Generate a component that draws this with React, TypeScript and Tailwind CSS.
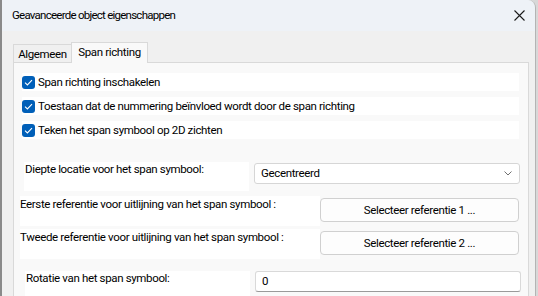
import React from 'react';

const font = { fontFamily: 'Roboto, "Noto Sans", sans-serif' };

const Check: React.FC = () => (
  <span className="flex h-[13px] w-[13px] shrink-0 items-center justify-center rounded-[3px] bg-[#005fb8]">
    <svg width="9" height="7" viewBox="0 0 9 7" fill="none">
      <path d="M1 3.6 L3.4 6 L8 1.2" stroke="#ffffff" strokeWidth="1.1" />
    </svg>
  </span>
);

const CheckRow: React.FC<{ label: string }> = ({ label }) => (
  <div className="ml-[2px] flex h-[18px] w-[497px] items-center gap-[3px] bg-white">
    <Check />
    <span>{label}</span>
  </div>
);

const App: React.FC = () => {
  return (
    <div
      className="flex h-[296px] w-[538px] overflow-hidden whitespace-nowrap bg-[#d8d8d8] text-[11.5px] leading-[15px] tracking-[-0.35px] text-black"
      style={font}
    >
      <div className="flex h-full w-[536px] flex-col overflow-hidden rounded-tr-[8px] border-l-2 border-r border-l-[#8a8a8a] border-r-[#b4b4b4]">
        <div className="flex h-[31px] shrink-0 items-center justify-between bg-[#eef2f7] pl-[10px] pr-[9px]">
          <span className="text-[11.5px] tracking-[-0.75px]">Geavanceerde object eigenschappen</span>
          <svg width="11" height="11" viewBox="0 0 11 11" className="mr-[1px]">
            <path d="M0.5 0.5 L10.5 10.5 M10.5 0.5 L0.5 10.5" stroke="#1a1a1a" strokeWidth="1.1" />
          </svg>
        </div>

        <div className="flex flex-1 flex-col bg-[#f0f0f0] pl-[11px] pt-[12px]">
          <div className="flex h-[19px] items-end">
            <div className="flex h-[18px] w-[59px] items-center justify-center border border-b-0 border-[#d9d9d9] bg-[#f0f0f0] pt-[1px]">
              Algemeen
            </div>
            <div className="relative -ml-px mb-[-1px] flex h-[21px] w-[77px] items-start justify-center border border-b-0 border-[#d9d9d9] bg-[#f9f9f9] pt-[2px]">
              Span richting
            </div>
          </div>

          <div className="flex w-[516px] flex-1 flex-col border border-b-0 border-[#d9d9d9] bg-[#f9f9f9] pl-[6px] pt-[10px]">
            <div className="flex flex-col gap-[6px]">
              <CheckRow label="Span richting inschakelen" />
              <CheckRow label="Toestaan dat de nummering beïnvloed wordt door de span richting" />
              <CheckRow label="Teken het span symbool op 2D zichten" />
            </div>

            <div className="mt-[23px] flex items-start">
              <div className="ml-[4px] h-[29px] w-[225px] bg-white pl-[1px]">Diepte locatie voor het span symbool:</div>
              <div className="ml-[5px] mt-[1px] flex h-[21px] w-[266px] items-center justify-between rounded-[3px] border border-[#d6d6d6] bg-white pl-[6px] pr-[7px]">
                <span>Gecentreerd</span>
                <svg width="8" height="5" viewBox="0 0 8 5">
                  <path d="M0.5 0.5 L4 4 L7.5 0.5" stroke="#707070" strokeWidth="1" fill="none" />
                </svg>
              </div>
            </div>

            <div className="mt-[5px] flex items-start">
              <div className="h-[30px] w-[300px] bg-white pt-[1px]">Eerste referentie voor uitlijning van het span symbool :</div>
              <div className="mt-[2px] flex h-[24px] w-[199px] items-center justify-center rounded-[4px] border border-[#d0d0d0] bg-[#fdfdfd]">
                Selecteer referentie 1 ...
              </div>
            </div>

            <div className="mt-[3px] flex items-start">
              <div className="h-[30px] w-[300px] bg-white pt-[1px]">Tweede referentie voor uitlijning van het span symbool :</div>
              <div className="mt-[2px] flex h-[24px] w-[199px] items-center justify-center rounded-[4px] border border-[#d0d0d0] bg-[#fdfdfd]">
                Selecteer referentie 2 ...
              </div>
            </div>

            <div className="mt-[12px] flex items-start">
              <div className="ml-[5px] h-[30px] w-[225px] bg-white pl-[1px]">Rotatie van het span symbool:</div>
              <div className="ml-[5px] flex h-[21px] w-[266px] items-center rounded-[3px] border border-[#d9d9d9] border-b-[#9a9a9a] bg-white pl-[6px]">
                0
              </div>
            </div>
          </div>
        </div>
      </div>
    </div>
  );
};

export default App;
